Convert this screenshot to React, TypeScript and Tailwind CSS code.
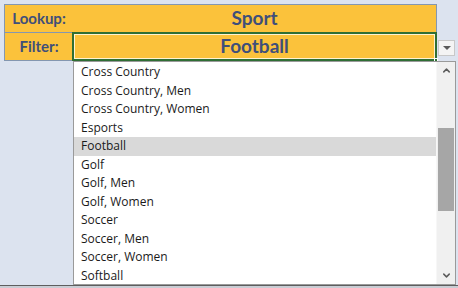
import { ChevronDown, ChevronUp } from "lucide-react";

const sports = [
  "Cross Country",
  "Cross Country, Men",
  "Cross Country, Women",
  "Esports",
  "Football",
  "Golf",
  "Golf, Men",
  "Golf, Women",
  "Soccer",
  "Soccer, Men",
  "Soccer, Women",
  "Softball",
];

const App = () => {
  return (
    <div className="relative flex flex-col w-[458px] h-[288px] overflow-hidden bg-[#dce3ef] font-['Lato',sans-serif]">
      {/* Lookup / Filter block */}
      <div className="ml-[4px] mt-[4px] w-[433px] border border-[#8497b0] bg-[#fbc23b] text-[#3f4f7a]">
        <div className="flex h-[28px] border-b border-[#8497b0]">
          <div className="w-[68px] flex items-center justify-center text-[15px] font-bold">
            Lookup:
          </div>
          <div className="flex-1 flex items-center justify-center text-[19px] font-bold">
            Sport
          </div>
        </div>
        <div className="flex h-[27px]">
          <div className="w-[68px] flex items-center justify-center text-[15px] font-bold">
            Filter:
          </div>
          {/* combobox cell */}
          <div className="relative flex-1 -ml-px -mt-px -mr-px h-[29px] border-2 border-[#2f6e34]">
            <div className="h-full border border-[#fff3cf] flex items-center justify-center text-[19px] font-bold">
              Football
            </div>
            <div className="absolute -right-[3px] -bottom-[3px] w-[4px] h-[4px] bg-[#2f6e34] border border-white" />
          </div>
        </div>
      </div>

      {/* dropdown button */}
      <div className="absolute left-[438px] top-[40px] w-[17px] h-[16px] flex items-center justify-center bg-[#f4f4f4] border border-[#c8c8c8]">
        <div className="w-0 h-0 border-l-[4px] border-r-[4px] border-t-[4px] border-l-transparent border-r-transparent border-t-[#5a5a5a]" />
      </div>

      {/* dropdown list */}
      <div className="absolute left-[73px] top-[61px] w-[383px] h-[224px] flex bg-white border border-[#9a9a9a] font-['Open_Sans',sans-serif] text-[12px] text-[#1a1a1a]">
        <div className="flex-1 pt-[1px]">
          {sports.map((s) => (
            <div
              key={s}
              className={
                s === "Football"
                  ? "h-[18.5px] flex items-center pl-[7px] bg-[#d9d9d9]"
                  : "h-[18.5px] flex items-center pl-[7px]"
              }
            >
              {s}
            </div>
          ))}
        </div>
        <div className="w-[19px] flex flex-col bg-[#f0f0f0] border-l border-[#f7f7f7]">
          <div className="h-[17px] flex items-center justify-center text-[#5a5a5a]">
            <ChevronUp size={11} strokeWidth={3.2} />
          </div>
          <div className="h-[49px]" />
          <div className="h-[83px] mx-[1px] bg-[#a6a6a6]" />
          <div className="flex-1" />
          <div className="h-[17px] flex items-center justify-center text-[#5a5a5a]">
            <ChevronDown size={11} strokeWidth={3.2} />
          </div>
        </div>
      </div>

      <div className="flex-1" />
      <div className="h-[3px] bg-[#c9cdd4] border-t border-[#5e5e5e]" />
    </div>
  );
};

export default App;
